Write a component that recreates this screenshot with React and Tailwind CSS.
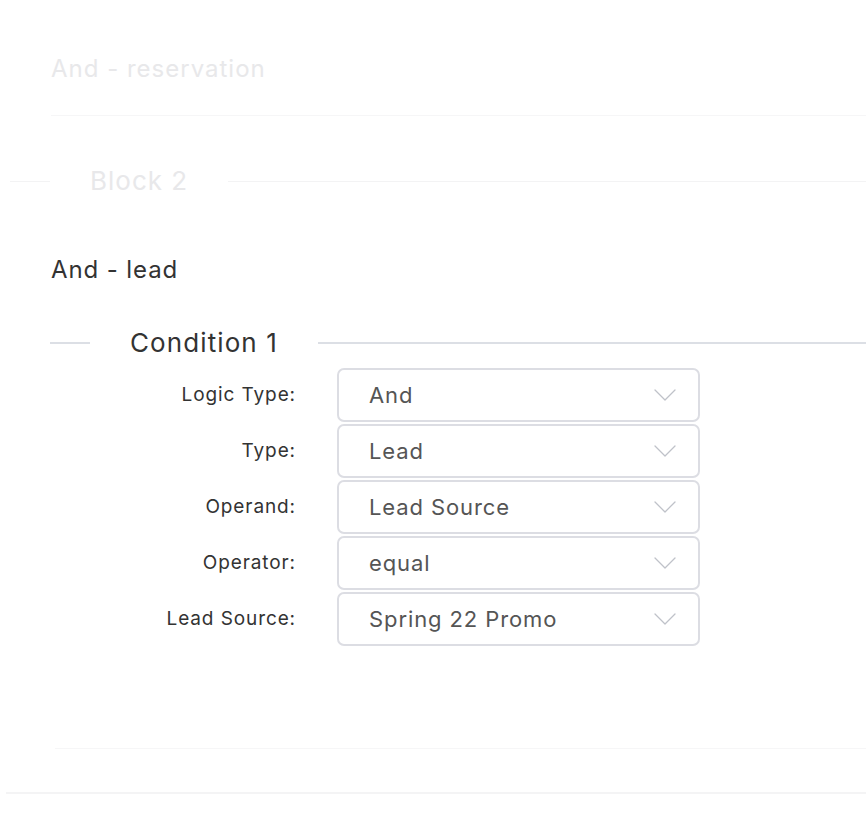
import React from 'react';

const rows = [
  { label: 'Logic Type:', value: 'And' },
  { label: 'Type:', value: 'Lead' },
  { label: 'Operand:', value: 'Lead Source' },
  { label: 'Operator:', value: 'equal' },
  { label: 'Lead Source:', value: 'Spring 22 Promo' },
];

const Chevron = () => (
  <svg width="22" height="12" viewBox="0 0 22 12" fill="none" className="shrink-0">
    <path d="M1 1 L11 11 L21 1" stroke="#bfc2c9" strokeWidth="1.3" strokeLinecap="round" strokeLinejoin="round" />
  </svg>
);

const SelectRow = ({ label, value }) => (
  <div className="flex items-center h-[56px]">
    <div className="w-[296px] text-right text-[19px] text-[#333] tracking-[0.9px]">{label}</div>
    <div className="ml-[41px] w-[363px] h-[54px] border-2 border-[#dcdde3] rounded-[7px] flex items-center justify-between pl-[30px] pr-[22px] bg-white">
      <span className="text-[22px] text-[#555] tracking-[0.9px]">{value}</span>
      <Chevron />
    </div>
  </div>
);

export default function App() {
  return (
    <div className="w-[866px] h-[818px] bg-white overflow-hidden" style={{ fontFamily: 'Inter, "Noto Sans", sans-serif' }}>
      {/* faded previous block */}
      <div className="pl-[51px] pt-[53px]">
        <div className="text-[24px] leading-[32px] text-[#e8e8ea] tracking-[1px]">And - reservation</div>
        <div className="mt-[30px] h-px bg-[#f6f6f7]" />
      </div>

      <div className="mt-[64px] flex items-center h-[2px] pl-[10px]">
        <div className="w-[40px] h-px bg-[#f3f3f4]" />
        <div className="pl-[40px] pr-[40px] text-[26px] text-[#e8e8ea] leading-none tracking-[1px]">Block 2</div>
        <div className="flex-1 h-px bg-[#f3f3f4]" />
      </div>

      <div className="mt-[72px] pl-[51px] text-[24px] leading-[32px] text-[#333] tracking-[0.9px]">And - lead</div>

      <div className="mt-[56px] flex items-center h-[2px] pl-[50px]">
        <div className="w-[40px] h-[2px] bg-[#dcdfe5]" />
        <div className="pl-[40px] pr-[40px] text-[26px] text-[#333] leading-none tracking-[1.1px]">Condition 1</div>
        <div className="flex-1 h-[2px] bg-[#dcdfe5]" />
      </div>

      <div className="mt-[23px] flex flex-col">
        {rows.map((r) => (
          <SelectRow key={r.label} label={r.label} value={r.value} />
        ))}
      </div>

      <div className="mt-[101px] ml-[55px] h-px bg-[#f6f6f7]" />
      <div className="mt-[43px] ml-[6px] h-[2px] bg-[#f4f4f5]" />
    </div>
  );
}
